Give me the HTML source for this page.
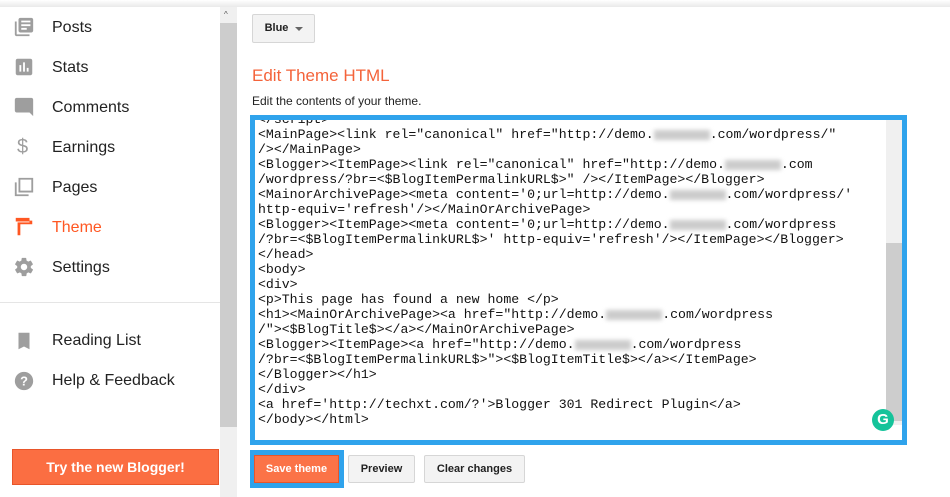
<!DOCTYPE html>
<html><head><style>
*{margin:0;padding:0;box-sizing:border-box}
body{width:950px;height:497px;overflow:hidden;background:#fff;font-family:"Liberation Sans",Arial,sans-serif;position:relative}
.topsh{position:absolute;left:0;top:0;width:950px;height:7px;background:linear-gradient(#fff,#e9e9e9)}
.nav{position:absolute;left:52px;font-size:16px;color:#222;line-height:20px}
.ic{position:absolute;left:13px;width:22px;height:22px}
.sb{position:absolute;left:220px;top:7px;width:17px;height:490px;background:#f0f0f0}
.sbt{position:absolute;left:220px;top:23px;width:17px;height:404px;background:#cdcdcd}
.btn{position:absolute;height:28px;border:1px solid #d6d6d6;background:#f3f3f3;border-radius:2px;font-size:11px;font-weight:bold;color:#222;text-align:center;line-height:26px}
pre{font-family:"Liberation Mono","Courier New",monospace;font-size:13.2px;line-height:15px;color:#111}
.bl{display:inline-block;width:56px;height:10px;background:#ccc;filter:blur(2px);vertical-align:middle}
</style></head><body>
<div class="topsh"></div>
<svg class="ic" style="top:16px" viewBox="0 0 24 24"><path fill="#9e9e9e" d="M4 6H2v14c0 1.1.9 2 2 2h14v-2H4V6zm16-4H8c-1.1 0-2 .9-2 2v12c0 1.1.9 2 2 2h12c1.1 0 2-.9 2-2V4c0-1.1-.9-2-2-2zm-1 9H9V9h10v2zm-4 4H9v-2h6v2zm4-8H9V5h10v2z"/></svg>
<div class="nav" style="top:18px">Posts</div>
<svg class="ic" style="top:56px" viewBox="0 0 24 24"><path fill="#9e9e9e" d="M19 3H5c-1.1 0-2 .9-2 2v14c0 1.1.9 2 2 2h14c1.1 0 2-.9 2-2V5c0-1.1-.9-2-2-2zM9 17H7v-7h2v7zm4 0h-2V7h2v10zm4 0h-2v-4h2v4z"/></svg>
<div class="nav" style="top:58px">Stats</div>
<svg class="ic" style="top:96px" viewBox="0 0 24 24"><path fill="#9e9e9e" d="M21.99 4c0-1.1-.89-2-1.99-2H4c-1.1 0-2 .9-2 2v12c0 1.1.9 2 2 2h14l4 4-.01-18z"/></svg>
<div class="nav" style="top:98px">Comments</div>
<div style="position:absolute;left:17px;top:136px;font-size:20px;color:#9e9e9e">$</div>
<div class="nav" style="top:138px">Earnings</div>
<svg class="ic" style="top:176px" viewBox="0 0 24 24"><path fill="none" stroke="#9e9e9e" stroke-width="2" d="M7 3h14v14H7z M3 7v14h14"/></svg>
<div class="nav" style="top:178px">Pages</div>
<svg class="ic" style="top:216px" viewBox="0 0 24 24"><path fill="#ff5722" d="M3 2h15v3h3v4H8v12H5V7h13V6H3z"/></svg>
<div class="nav" style="top:218px;color:#ff5722">Theme</div>
<svg class="ic" style="top:256px" viewBox="0 0 24 24"><path fill="#9e9e9e" d="M19.4 13c.04-.3.06-.6.06-1s-.02-.7-.06-1l2.1-1.6c.2-.15.24-.42.12-.64l-2-3.460c-.12-.22-.39-.3-.61-.22l-2.5 1c-.5-.4-1.1-.7-1.7-1l-.4-2.6C14.4 2.2 14.2 2 14 2h-4c-.25 0-.46.18-.5.42l-.38 2.65c-.6.25-1.2.6-1.700 1l-2.5-1c-.2-.08-.5 0-.6.22l-2 3.46c-.13.22-.07.49.12.64L4.6 11c-.04.3-.07.65-.07 1s.02.7.06 1l-2.1 1.6c-.2.15-.24.42-.12.64l2 3.46c.12.22.39.3.61.22l2.5-1c.5.4 1.1.7 1.7 1l.38 2.65c.04.24.25.42.5.42h4c.25 0 .46-.18.5-.42l.38-2.65c.6-.25 1.2-.6 1.7-1l2.5 1c.23.09.5 0 .6-.22l2-3.46c.12-.22.07-.49-.12-.64L19.4 13zM12 15.5c-1.9 0-3.5-1.6-3.5-3.5s1.6-3.5 3.5-3.5 3.5 1.6 3.5 3.5-1.6 3.5-3.5 3.5z"/></svg>
<div class="nav" style="top:258px">Settings</div>
<div style="position:absolute;left:0;top:302px;width:220px;height:1px;background:#e5e5e5"></div>
<svg class="ic" style="top:330px" viewBox="0 0 24 24"><path fill="#9e9e9e" d="M6 3h12v18l-6-3-6 3z"/></svg>
<div class="nav" style="top:331px">Reading List</div>
<svg class="ic" style="top:370px" viewBox="0 0 24 24"><circle cx="12" cy="12" r="10" fill="#9e9e9e"/><text x="12" y="17" font-size="14" font-weight="bold" fill="#fff" text-anchor="middle" font-family="Liberation Sans">?</text></svg>
<div class="nav" style="top:371px">Help &amp; Feedback</div>
<div style="position:absolute;left:12px;top:449px;width:207px;height:36px;background:#fb6e42;border:1px solid #e8552a;color:#fff;font-weight:bold;font-size:14px;text-align:center;line-height:34px">Try the new Blogger!</div>
<div class="sb"></div><div class="sbt"></div>
<div style="position:absolute;left:224px;top:10px;font-size:8px;color:#555">^</div>
<div class="btn" style="left:252px;top:14px;width:63px;height:29px;line-height:27px;padding-right:14px">Blue<span style="position:absolute;right:11px;top:12px;border:4px solid transparent;border-top-color:#666"></span></div>
<div style="position:absolute;left:252px;top:66px;font-size:17px;color:#f4633a">Edit Theme HTML</div>
<div style="position:absolute;left:252px;top:94px;font-size:12px;color:#222">Edit the contents of your theme.</div>
<div style="position:absolute;left:250px;top:115px;width:657px;height:330px;border:5px solid #2fa3ec;background:#fff;overflow:hidden">
<pre style="position:absolute;left:3px;top:-8px">&lt;/script&gt;
&lt;MainPage&gt;&lt;link rel="canonical" href="http://demo.<span class="bl"></span>.com/wordpress/"
/&gt;&lt;/MainPage&gt;
&lt;Blogger&gt;&lt;ItemPage&gt;&lt;link rel="canonical" href="http://demo.<span class="bl"></span>.com
/wordpress/?br=&lt;$BlogItemPermalinkURL$&gt;" /&gt;&lt;/ItemPage&gt;&lt;/Blogger&gt;
&lt;MainorArchivePage&gt;&lt;meta content='0;url=http://demo.<span class="bl"></span>.com/wordpress/'
http-equiv='refresh'/&gt;&lt;/MainOrArchivePage&gt;
&lt;Blogger&gt;&lt;ItemPage&gt;&lt;meta content='0;url=http://demo.<span class="bl"></span>.com/wordpress
/?br=&lt;$BlogItemPermalinkURL$&gt;' http-equiv='refresh'/&gt;&lt;/ItemPage&gt;&lt;/Blogger&gt;
&lt;/head&gt;
&lt;body&gt;
&lt;div&gt;
&lt;p&gt;This page has found a new home &lt;/p&gt;
&lt;h1&gt;&lt;MainOrArchivePage&gt;&lt;a href="http://demo.<span class="bl"></span>.com/wordpress
/"&gt;&lt;$BlogTitle$&gt;&lt;/a&gt;&lt;/MainOrArchivePage&gt;
&lt;Blogger&gt;&lt;ItemPage&gt;&lt;a href="http://demo.<span class="bl"></span>.com/wordpress
/?br=&lt;$BlogItemPermalinkURL$&gt;"&gt;&lt;$BlogItemTitle$&gt;&lt;/a&gt;&lt;/ItemPage&gt;
&lt;/Blogger&gt;&lt;/h1&gt;
&lt;/div&gt;
&lt;a href='http://techxt.com/?'&gt;Blogger 301 Redirect Plugin&lt;/a&gt;
&lt;/body&gt;&lt;/html&gt;</pre>
<div style="position:absolute;left:631px;top:0;width:16px;height:305px;background:#f0f0f0"></div>
<div style="position:absolute;left:631px;top:123px;width:16px;height:178px;background:#cdcdcd"></div>
<div style="position:absolute;left:617px;top:289px;width:22px;height:22px;border-radius:50%;background:#15c39a;color:#fff;font-weight:bold;font-size:15px;text-align:center;line-height:22px">G</div>
</div>
<div style="position:absolute;left:250px;top:450px;width:94px;height:38px;background:#2fa3ec"></div>
<div style="position:absolute;left:254px;top:455px;width:85px;height:28px;background:#fb7347;border:1px solid #e8552a;color:#fff;font-size:11px;font-weight:bold;text-align:center;line-height:26px">Save theme</div>
<div class="btn" style="left:348px;top:455px;width:67px">Preview</div>
<div class="btn" style="left:424px;top:455px;width:101px">Clear changes</div>
</body></html>
